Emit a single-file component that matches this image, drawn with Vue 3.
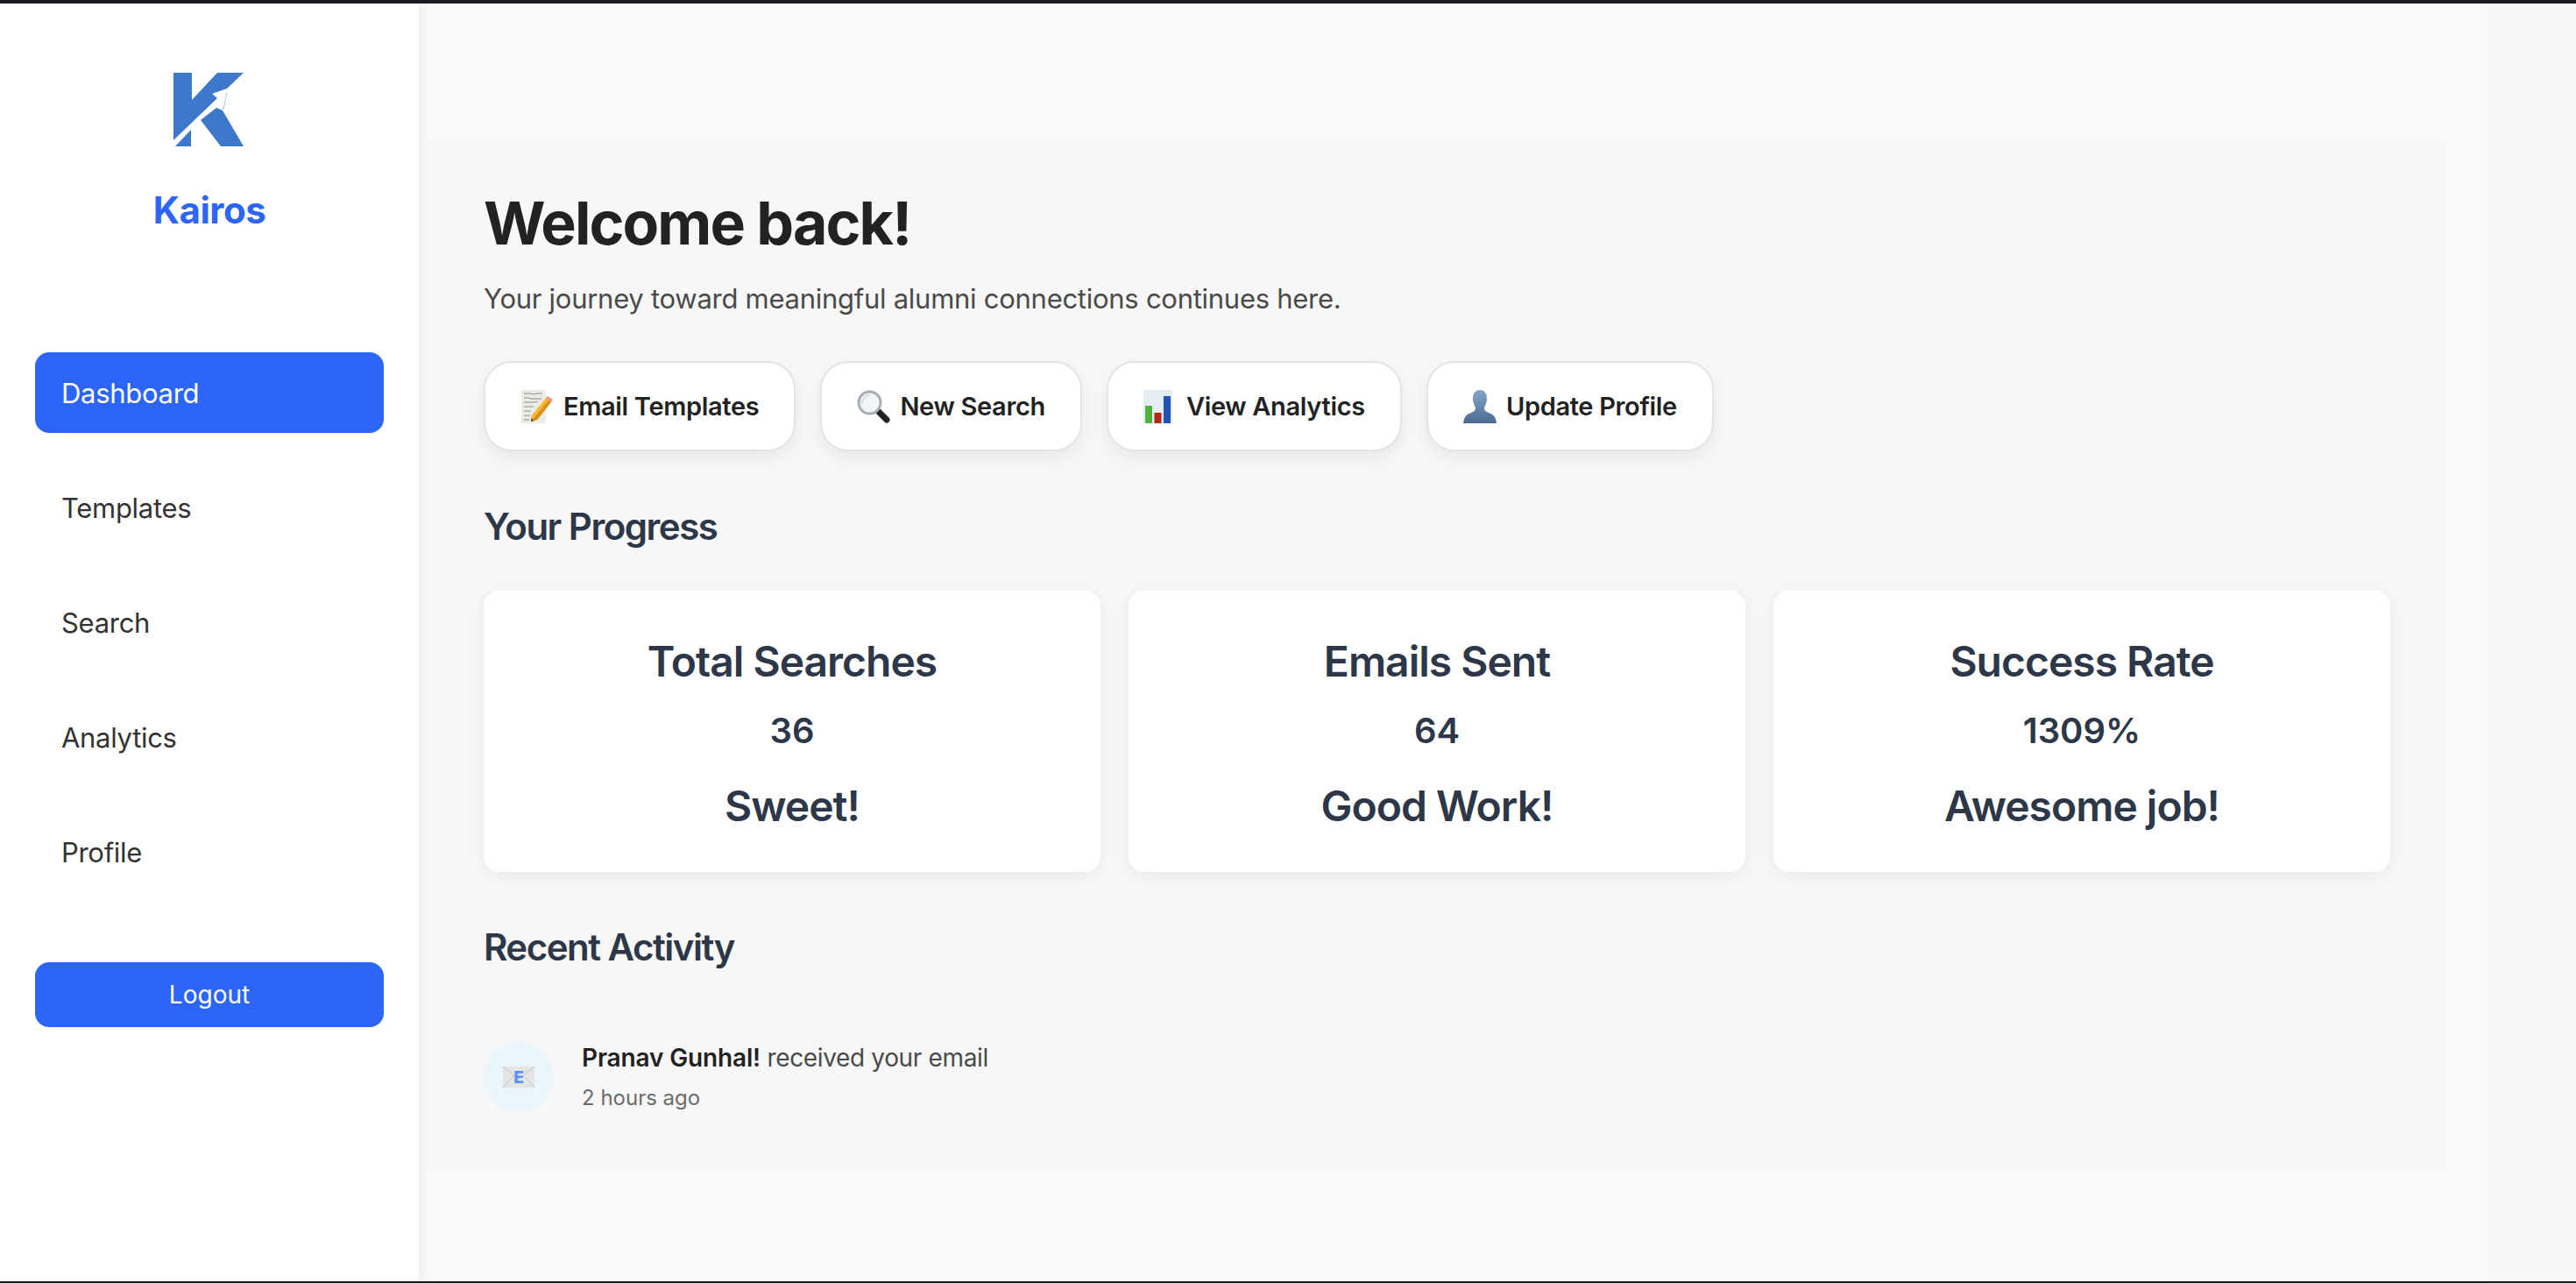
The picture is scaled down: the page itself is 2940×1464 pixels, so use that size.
<template>
  <div class="page">
    <div class="top-bar"></div>
    <div class="shell">
      <aside class="sidebar">
        <div class="brand">
          <svg class="logo" viewBox="160 60 160 120" aria-hidden="true">
            <path fill="#3d78cb" d="M199 83h21v31l29-31h30l-19 18-17 6 6 5-50 48z" />
            <path fill="#3d78cb" d="M201 167l18-19v19z" />
            <path fill="#3d78cb" d="M230 137l18-14 7 3 24 41h-26z" />
            <path fill="none" stroke="#a9c6f2" stroke-width="1" d="M260 105l-4 20-2-2" />
          </svg>
          <h1 class="brand-name">Kairos</h1>
        </div>
        <nav class="nav">
          <a v-for="item in navItems" :key="item" class="nav-item" :class="{ active: item === 'Dashboard' }">{{ item }}</a>
        </nav>
        <button class="logout">Logout</button>
      </aside>

      <main class="main">
        <section class="panel">
          <h2 class="welcome">Welcome back!</h2>
          <p class="tagline">Your journey toward meaningful alumni connections continues here.</p>

          <div class="actions">
            <button class="action">
              <svg class="emoji" viewBox="0 0 38 38" aria-hidden="true">
                <path fill="#ecebe6" d="M1 0h28v38H1z" />
                <path fill="none" stroke="#77756f" stroke-width=".8" d="M4 4h8l2 1 5-1h6M4 9h5l3 1h12M4 14h12l4-1M4 19h11M4 24h8M4 29h7M4 34h6" />
                <path fill="#f6bc2e" d="M29 9l6 5-16 20-7 2 1-7z" />
                <path fill="#d98e16" d="M32 11.500l3 2.500-16 20-7 2z" />
                <path fill="#ee8f8f" d="M29 9l2-2 6 4-2 3z" />
                <path fill="#3a3a3a" d="M12 36l.500-4 2.500 3z" />
              </svg>
              Email Templates
            </button>
            <button class="action">
              <svg class="emoji" viewBox="0 0 38 38" aria-hidden="true">
                <path fill="#222" stroke="#222" stroke-width="7" stroke-linecap="round" d="M25 25l9 9" />
                <circle cx="14.500" cy="14.500" r="12.500" fill="#f2f5f8" stroke="#a9adb3" stroke-width="3" />
                <path fill="none" stroke="#d7dce2" stroke-width="2" d="M6 16a9 9 0 0 1 9-10" />
              </svg>
              New Search
            </button>
            <button class="action">
              <svg class="emoji" viewBox="0 0 38 38" aria-hidden="true">
                <path fill="#e6edf2" d="M0 0h33v38H0z" />
                <path fill="#4db53a" d="M2 18h8v20H2z" />
                <path fill="#b3261b" d="M12.500 26h8v12h-8z" />
                <path fill="#1f53b5" d="M23 7h8v31h-8z" />
              </svg>
              View Analytics
            </button>
            <button class="action">
              <svg class="emoji" viewBox="0 0 38 38" aria-hidden="true">
                <defs>
                  <linearGradient id="bust" x1="0" y1="0" x2="0" y2="1">
                    <stop offset="0" stop-color="#86a6c8" />
                    <stop offset="1" stop-color="#496a92" />
                  </linearGradient>
                </defs>
                <path fill="url(#bust)" d="M19 0c6 0 8 5 8 10 0 4-2 8-3 10 0 3 1 4 5 6 5 2 8 4 9 12H0c1-8 4-10 9-12 4-2 5-3 5-6-1-2-3-6-3-10 0-5 2-10 8-10z" />
              </svg>
              Update Profile
            </button>
          </div>

          <h3 class="section-title">Your Progress</h3>
          <div class="stats">
            <div v-for="stat in stats" :key="stat.title" class="stat">
              <div class="stat-title">{{ stat.title }}</div>
              <div class="stat-value">{{ stat.value }}</div>
              <div class="stat-note">{{ stat.note }}</div>
            </div>
          </div>

          <h3 class="section-title recent-title">Recent Activity</h3>
          <div class="activity">
            <div class="activity-icon">
              <svg class="mail" viewBox="0 0 36 24" aria-hidden="true">
                <path fill="#e4e4e4" d="M0 0h36v24H0z" />
                <path fill="none" stroke="#c4c4c4" stroke-width="1" d="M0 0l18 14L36 0M0 24l13-14M36 24L23 10" />
                <text x="18" y="18.500" text-anchor="middle" class="mail-e">E</text>
              </svg>
            </div>
            <div class="activity-body">
              <p class="activity-line"><strong>Pranav Gunhal!</strong> received your email</p>
              <p class="activity-time">2 hours ago</p>
            </div>
          </div>
        </section>
      </main>
      <div class="edge"></div>
    </div>
    <div class="bottom-bar"></div>
  </div>
</template>

<script setup>
const navItems = ["Dashboard", "Templates", "Search", "Analytics", "Profile"];

const stats = [
  { title: "Total Searches", value: "36", note: "Sweet!" },
  { title: "Emails Sent", value: "64", note: "Good Work!" },
  { title: "Success Rate", value: "1309%", note: "Awesome job!" }
];
</script>

<style>
html,
body {
  margin: 0;
  background: #f9f9f9;
}
</style>

<style scoped>
.page {
  display: flex;
  flex-direction: column;
  height: 1464px;
  font-family: Inter, "Noto Sans", sans-serif;
  color: #222;
}

.top-bar {
  height: 4px;
  background: #1c1c24;
}

.bottom-bar {
  height: 2px;
  background: #1c1c1e;
}

.shell {
  flex: 1;
  display: flex;
  min-height: 0;
}

.sidebar {
  width: 478px;
  flex-shrink: 0;
  box-sizing: border-box;
  padding: 56px 40px 0;
  background: #fff;
  box-shadow: 4px 0 12px rgba(0, 0, 0, 0.05);
  position: relative;
  z-index: 1;
}

.brand {
  display: flex;
  flex-direction: column;
  align-items: center;
}

.logo {
  width: 160px;
  height: 120px;
}

.brand-name {
  margin: 33px 0 0;
  font-size: 42px;
  line-height: 54px;
  font-weight: 700;
  letter-spacing: -0.5px;
  color: #2b65f9;
}

.nav {
  display: flex;
  flex-direction: column;
  gap: 39px;
  margin-top: 135px;
}

.nav-item {
  height: 92px;
  display: flex;
  align-items: center;
  padding-left: 30px;
  border-radius: 16px;
  font-size: 31px;
  letter-spacing: -0.3px;
  color: #333;
}

.nav-item.active {
  background: #2b65f9;
  color: #fff;
}

.logout {
  display: block;
  width: 100%;
  height: 74px;
  margin-top: 80px;
  border: 0;
  border-radius: 16px;
  background: #2b65f9;
  color: #fff;
  font: 400 28px Inter, sans-serif;
}

.main {
  flex: 1;
  box-sizing: border-box;
  padding: 159px 48px 0 8px;
  background: #f9f9f9;
}

.edge {
  width: 100px;
  flex-shrink: 0;
  background: #f7f7f7;
}

.panel {
  box-sizing: border-box;
  height: 1173px;
  padding: 46px 64px 0 66px;
  background: #f7f7f7;
}

.welcome {
  margin: 0;
  font-size: 68px;
  line-height: 90px;
  font-weight: 700;
  letter-spacing: -1.9px;
  color: #222;
}

.tagline {
  margin: 20px 0 0;
  font-size: 31px;
  line-height: 44px;
  letter-spacing: -0.27px;
  color: #4a4a4a;
}

.actions {
  display: flex;
  gap: 28px;
  margin-top: 49px;
}

.action {
  display: flex;
  align-items: center;
  gap: 11px;
  height: 103px;
  padding: 0 40px;
  box-sizing: border-box;
  border: 2px solid #e4e4e4;
  border-radius: 32px;
  background: #fff;
  box-shadow: 0 8px 20px rgba(0, 0, 0, 0.06);
  font: 600 29px Inter, sans-serif;
  letter-spacing: -0.33px;
  color: #222;
}

.emoji {
  height: 38px;
  width: 38px;
  flex-shrink: 0;
}

.section-title {
  margin: 61px 0 0;
  font-size: 42px;
  line-height: 50px;
  font-weight: 600;
  letter-spacing: -1.5px;
  color: #2d3748;
}

.stats {
  display: grid;
  grid-template-columns: repeat(3, 1fr);
  gap: 32px;
  margin-top: 48px;
}

.stat {
  height: 321px;
  box-sizing: border-box;
  padding-top: 52px;
  border-radius: 18px;
  background: #fff;
  box-shadow: 0 4px 20px rgba(0, 0, 0, 0.06);
  text-align: center;
  color: #2d3748;
  font-weight: 600;
}

.stat-title {
  font-size: 48px;
  line-height: 58px;
  letter-spacing: -1px;
}

.stat-value {
  margin-top: 26px;
  font-size: 40px;
  line-height: 48px;
}

.stat-note {
  margin-top: 33px;
  font-size: 48px;
  line-height: 58px;
  letter-spacing: -1px;
}

.recent-title {
  margin-top: 61px;
}

.activity {
  display: flex;
  align-items: center;
  gap: 32px;
  margin-top: 83px;
}

.activity-icon {
  width: 80px;
  height: 80px;
  flex-shrink: 0;
  display: flex;
  align-items: center;
  justify-content: center;
  border-radius: 50%;
  background: #ebf5fc;
}

.mail {
  width: 36px;
  height: 24px;
}

.mail-e {
  font: 800 19px Inter, sans-serif;
  fill: #5b93ee;
}

.activity-line {
  margin: 0;
  font-size: 28px;
  line-height: 36px;
  letter-spacing: -0.35px;
  color: #4a4a4a;
}

.activity-line strong {
  font-weight: 600;
  letter-spacing: -0.15px;
  color: #222;
}

.activity-time {
  margin: 12px 0 0;
  font-size: 24px;
  line-height: 32px;
  color: #6b6b6b;
}
</style>
